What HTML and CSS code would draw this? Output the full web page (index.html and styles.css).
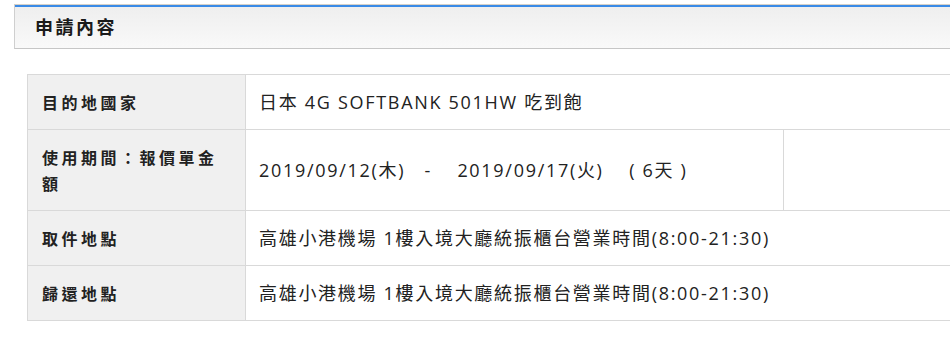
FILE: index.html
```html
<!DOCTYPE html>
<html lang="zh-Hant">
<head>
<meta charset="utf-8">
<title>申請內容</title>
<link rel="stylesheet" href="styles.css">
</head>
<body>
<div class="page">
  <div class="panel-head">申請內容</div>
  <div class="panel-body">
    <table class="info">
      <colgroup>
        <col class="c-label">
        <col class="c-value">
        <col class="c-extra">
      </colgroup>
      <tr>
        <th>目的地國家</th>
        <td colspan="2">日本 4G SOFTBANK 501HW 吃到飽</td>
      </tr>
      <tr>
        <th>使用期間：報價單金額</th>
        <td>2019/09/12(木)&nbsp;&nbsp;&nbsp;-&nbsp;&nbsp;&nbsp;&nbsp;2019/09/17(火)&nbsp;&nbsp;&nbsp;&nbsp;(&nbsp;6天&nbsp;)</td>
        <td></td>
      </tr>
      <tr>
        <th>取件地點</th>
        <td colspan="2">高雄小港機場 1樓入境大廳統振櫃台營業時間(8:00-21:30)</td>
      </tr>
      <tr>
        <th>歸還地點</th>
        <td colspan="2">高雄小港機場 1樓入境大廳統振櫃台營業時間(8:00-21:30)</td>
      </tr>
    </table>
  </div>
</div>
</body>
</html>
```

FILE: styles.css
```css
html, body {
  margin: 0;
  padding: 0;
  background: #ffffff;
  overflow: hidden;
}

body {
  font-family: "Open Sans", "Noto Sans CJK TC", sans-serif;
  color: #222222;
}

.page {
  width: 980px;
  padding: 4px 0 0 14px;
}

.panel-head {
  height: 41px;
  line-height: 39px;
  padding-left: 20px;
  padding-top: 2px;
  border-top: 1px solid #d6d1c8;
  box-shadow: inset 0 2px 0 #3a8ae6;
  border-left: 1px solid #cfcfcf;
  border-bottom: 1px solid #c6c6c6;
  background: linear-gradient(#eeeeee, #f9f9f9);
  font-family: "Noto Sans CJK TC", sans-serif;
  font-size: 18px;
  font-weight: 700;
  letter-spacing: 2.5px;
  color: #1a1a1a;
}

.panel-body {
  padding: 25px 0 0 13px;
}

.info {
  border-collapse: collapse;
  width: 960px;
  table-layout: fixed;
}

.c-label { width: 218px; }
.c-value { width: 538px; }

.info th,
.info td {
  border: 1px solid #d9d9d9;
  padding: 14px 0;
  line-height: 26px;
  vertical-align: middle;
  text-align: left;
}

.info th {
  background: #f0f0f0;
  padding-left: 14px;
  padding-right: 14px;
  font-family: "Noto Sans CJK TC", sans-serif;
  font-size: 16px;
  font-weight: 700;
  letter-spacing: 3.5px;
  color: #222222;
}

.info td {
  padding-left: 13px;
  padding-right: 13px;
  font-size: 18px;
  letter-spacing: 1.7px;
  color: #222222;
}
```
